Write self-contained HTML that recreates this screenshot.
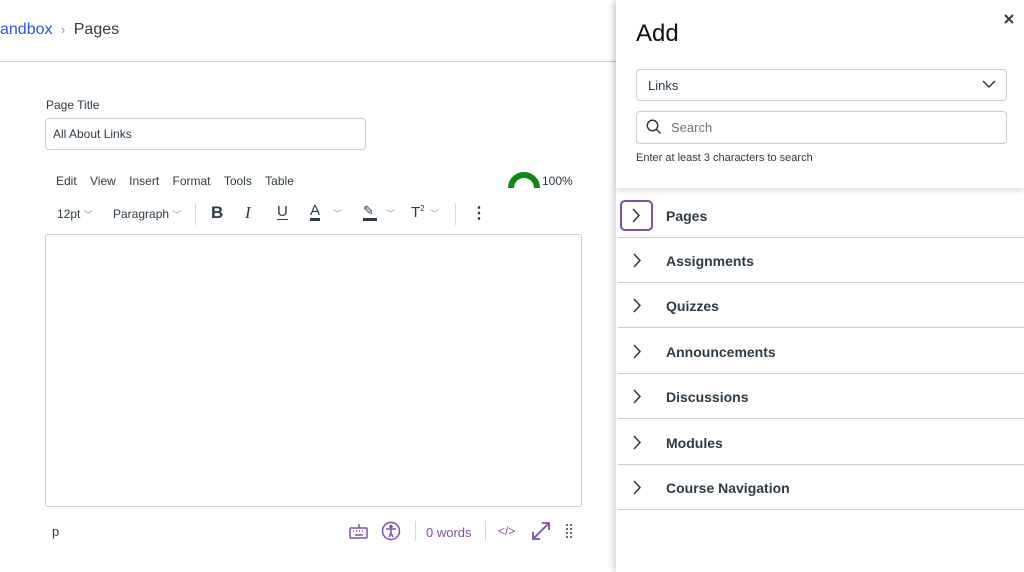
<!DOCTYPE html>
<html><head><style>
*{box-sizing:border-box;margin:0;padding:0}
body{width:1024px;height:572px;overflow:hidden;background:#fff;font-family:"Liberation Sans",sans-serif;color:#2d3b45;position:relative}
.a{position:absolute;white-space:nowrap}
.m{font-size:12px;color:#2d3b45}
.row{position:absolute;left:618px;width:406px;height:45px;border-bottom:1px solid #c7cdd1}
.row span{position:absolute;left:48px;top:15px;font-size:14px;font-weight:bold;color:#2d3b45}
.row svg{position:absolute;left:14px;top:15px}
</style></head><body>
<div class="a" style="left:0;top:21px;font-size:16px"><span style="color:#2b57d9">andbox</span> <span style="color:#8b969e;font-size:13px;margin:0 4px">›</span> <span style="color:#2d3b45">Pages</span></div>
<div class="a" style="left:0;top:61px;width:616px;height:1px;background:#c7cdd1"></div>
<div class="a" style="left:46px;top:98px;font-size:12px">Page Title</div>
<div class="a" style="left:45px;top:118px;width:321px;height:32px;border:1px solid #c7cdd1;border-radius:4px;font-size:12px;padding:8px 7px">All About Links</div>
<div class="a m" style="left:56px;top:174px;word-spacing:0">Edit&nbsp;&nbsp;&nbsp;&nbsp;View&nbsp;&nbsp;&nbsp;&nbsp;Insert&nbsp;&nbsp;&nbsp;&nbsp;Format&nbsp;&nbsp;&nbsp;&nbsp;Tools&nbsp;&nbsp;&nbsp;&nbsp;Table</div>
<svg class="a" style="left:508px;top:172px" width="32" height="16"><path d="M3 16 A13 13 0 0 1 29 16" fill="none" stroke="#0b8a16" stroke-width="6"/></svg>
<div class="a m" style="left:542px;top:174px">100%</div>
<div class="a m" style="left:57px;top:207px">12pt <span style="color:#8b969e;font-size:9px">﹀</span></div>
<div class="a m" style="left:113px;top:207px">Paragraph <span style="color:#8b969e;font-size:9px">﹀</span></div>
<div class="a" style="left:195px;top:203px;width:1px;height:22px;background:#d7dadd"></div>
<div class="a" style="left:211px;top:203px;font-size:17px;font-weight:bold">B</div>
<div class="a" style="left:245px;top:203px;font-size:17px;font-style:italic;font-family:'Liberation Serif',serif">I</div>
<div class="a" style="left:277px;top:204px;font-size:15px;border-bottom:1.5px solid #2d3b45;line-height:15px">U</div>
<div class="a" style="left:310px;top:203px;font-size:15px;border-bottom:3px solid #2d3b45;line-height:15px">A</div>
<div class="a" style="left:333px;top:207px;font-size:9px;color:#8b969e">﹀</div>
<div class="a" style="left:363px;top:203px;font-size:13px;border-bottom:3px solid #2d3b45;line-height:15px;width:14px">✎</div>
<div class="a" style="left:386px;top:207px;font-size:9px;color:#8b969e">﹀</div>
<div class="a" style="left:411px;top:204px;font-size:15px">T<sup style="font-size:8px">2</sup></div>
<div class="a" style="left:430px;top:207px;font-size:9px;color:#8b969e">﹀</div>
<div class="a" style="left:455px;top:203px;width:1px;height:22px;background:#d7dadd"></div>
<div class="a" style="left:471px;top:203px;font-size:16px;font-weight:bold">⋮</div>
<div class="a" style="left:45px;top:234px;width:537px;height:273px;border:1px solid #c7cdd1;border-radius:3px"></div>
<div class="a" style="left:52px;top:524px;font-size:13px">p</div>
<svg class="a" style="left:349px;top:523px" width="20" height="16" fill="none" stroke="#7e4ea8" stroke-width="1.5"><rect x="1" y="5" width="17" height="10" rx="1"/><path d="M10 5V1M4 8h1M7 8h1M10 8h1M13 8h1M6 12h8"/></svg>
<svg class="a" style="left:381px;top:521px" width="20" height="20" fill="none" stroke="#7e4ea8" stroke-width="1.5"><circle cx="10" cy="10" r="8.5"/><circle cx="10" cy="5.5" r="1" fill="#7e4ea8"/><path d="M5 8h10M10 8v4M10 12l-2 4M10 12l2 4"/></svg>
<div class="a" style="left:415px;top:521px;width:1px;height:20px;background:#d7dadd"></div>
<div class="a" style="left:426px;top:525px;font-size:13px;color:#7e4ea8">0 words</div>
<div class="a" style="left:485px;top:521px;width:1px;height:20px;background:#d7dadd"></div>
<div class="a" style="left:498px;top:524px;font-size:12px;color:#7e4ea8">&lt;/&gt;</div>
<svg class="a" style="left:531px;top:521px" width="20" height="20" fill="none" stroke="#7e4ea8" stroke-width="1.8"><path d="M2 18L18 2M11 2h7v7M2 11v7h7"/></svg>
<svg class="a" style="left:566px;top:524px" width="6" height="16" fill="#2d3b45"><circle cx="1" cy="1" r="1"/><circle cx="5" cy="1" r="1"/><circle cx="1" cy="5" r="1"/><circle cx="5" cy="5" r="1"/><circle cx="1" cy="9" r="1"/><circle cx="5" cy="9" r="1"/><circle cx="1" cy="13" r="1"/><circle cx="5" cy="13" r="1"/></svg>
<div class="a" style="left:616px;top:0;width:408px;height:572px;background:#fff;box-shadow:-3px 0 6px rgba(0,0,0,.15)"></div>
<div class="a" style="left:616px;top:0;width:408px;height:188px;background:#fff;box-shadow:0 3px 5px rgba(0,0,0,.12)"></div>
<div class="a" style="left:636px;top:20px;font-size:24px;color:#111">Add</div>
<svg class="a" style="left:1004px;top:14px" width="10" height="10" stroke="#2d3b45" stroke-width="2"><path d="M1 1l8 8M9 1l-8 8"/></svg>
<div class="a" style="left:636px;top:69px;width:371px;height:32px;border:1px solid #c7cdd1;border-radius:4px;font-size:13px;padding:8px 11px">Links</div>
<svg class="a" style="left:982px;top:80px" width="14" height="9" fill="none" stroke="#2d3b45" stroke-width="1.5"><path d="M1 1l6 6 6-6"/></svg>
<div class="a" style="left:636px;top:111px;width:371px;height:33px;border:1px solid #c7cdd1;border-radius:4px"></div>
<svg class="a" style="left:646px;top:119px" width="16" height="16" fill="none" stroke="#2d3b45" stroke-width="1.5"><circle cx="6.5" cy="6.5" r="5.2"/><path d="M10.5 10.5l4 4"/></svg>
<div class="a" style="left:671px;top:120px;font-size:13px;color:#68777d">Search</div>
<div class="a" style="left:636px;top:152px;font-size:11px;color:#2d3b45">Enter at least 3 characters to search</div>
<div class="row" style="top:193px"><span style="top:15px">Pages</span></div>
<div class="a" style="left:620px;top:200px;width:33px;height:31px;border:2px solid #7e4ea8;border-radius:5px"></div>
<svg class="a" style="left:631px;top:208px" width="10" height="15" fill="none" stroke="#2d3b45" stroke-width="1.5"><path d="M2 1l6 6.5-6 6.5"/></svg>
<div class="row" style="top:238px"><svg width="10" height="15" fill="none" stroke="#2d3b45" stroke-width="1.5"><path d="M2 1l6 6.5-6 6.5"/></svg><span>Assignments</span></div>
<div class="row" style="top:283px"><svg width="10" height="15" fill="none" stroke="#2d3b45" stroke-width="1.5"><path d="M2 1l6 6.5-6 6.5"/></svg><span>Quizzes</span></div>
<div class="row" style="top:329px"><svg width="10" height="15" fill="none" stroke="#2d3b45" stroke-width="1.5"><path d="M2 1l6 6.5-6 6.5"/></svg><span>Announcements</span></div>
<div class="row" style="top:374px"><svg width="10" height="15" fill="none" stroke="#2d3b45" stroke-width="1.5"><path d="M2 1l6 6.5-6 6.5"/></svg><span>Discussions</span></div>
<div class="row" style="top:420px"><svg width="10" height="15" fill="none" stroke="#2d3b45" stroke-width="1.5"><path d="M2 1l6 6.5-6 6.5"/></svg><span>Modules</span></div>
<div class="row" style="top:465px"><svg width="10" height="15" fill="none" stroke="#2d3b45" stroke-width="1.5"><path d="M2 1l6 6.5-6 6.5"/></svg><span>Course Navigation</span></div>
</body></html>
